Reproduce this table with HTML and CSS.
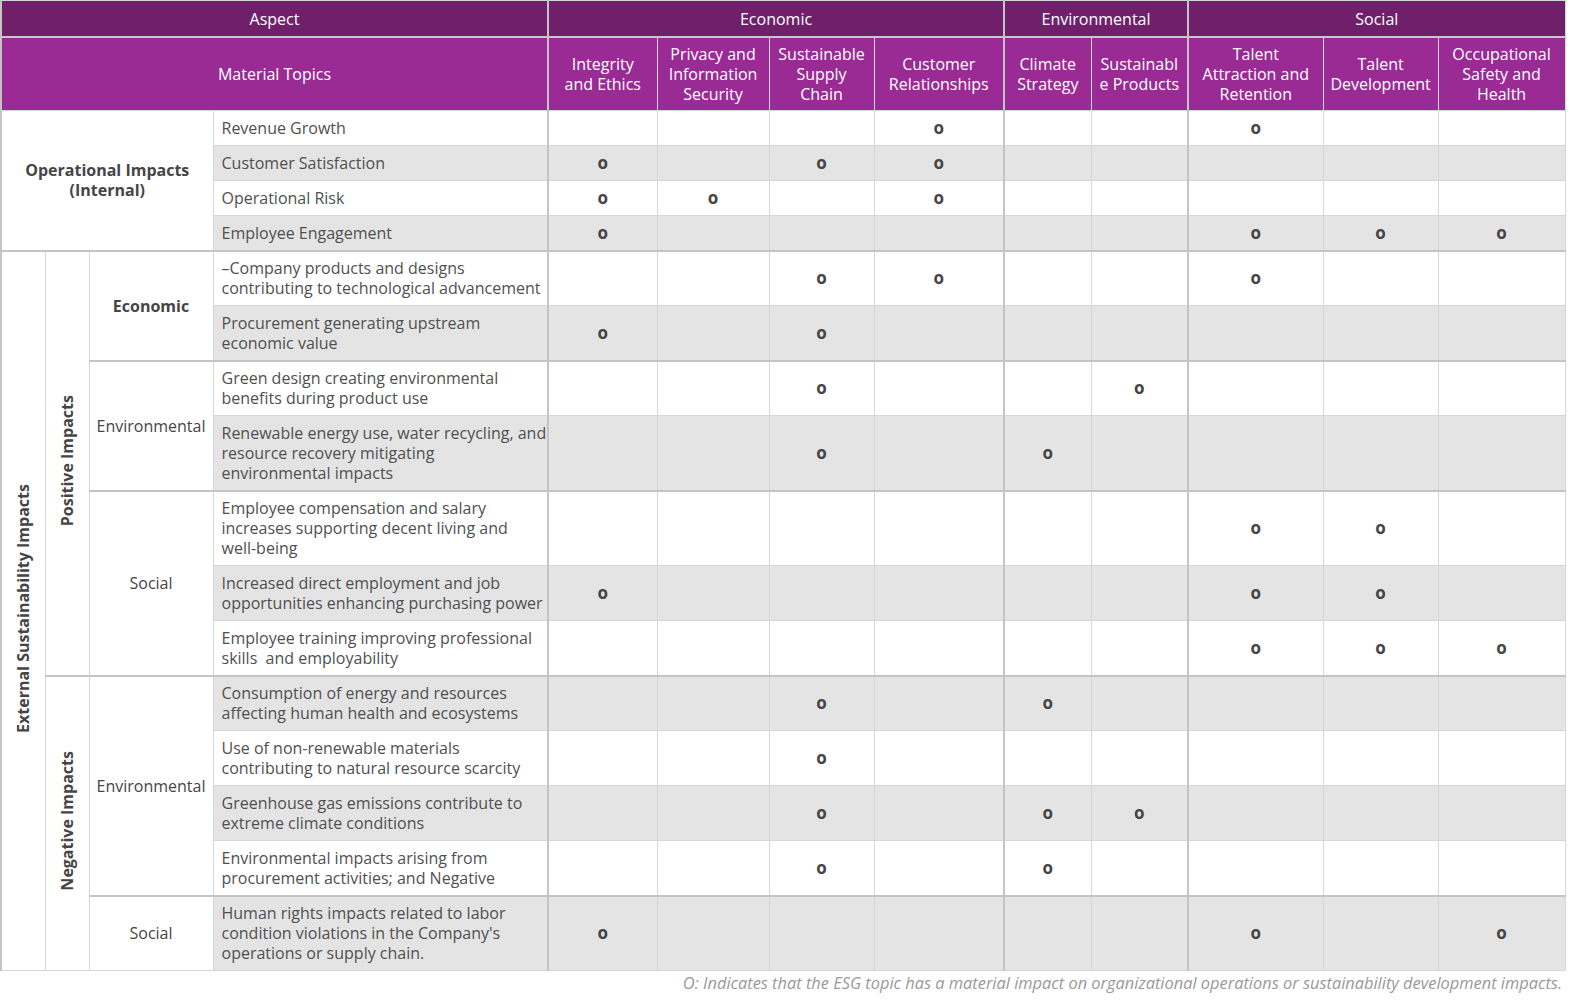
FILE: index.html
```html
<!DOCTYPE html>
<html lang="en">
<head>
<meta charset="utf-8">
<title>Material Topics Impact Matrix</title>
<link rel="stylesheet" href="styles.css">
</head>
<body>
<div class="wrap">
<table class="matrix">
  <colgroup>
    <col class="c-a"><col class="c-b"><col class="c-c"><col class="c-d">
    <col class="c-e1"><col class="c-e2"><col class="c-e3"><col class="c-e4">
    <col class="c-n1"><col class="c-n2">
    <col class="c-s1"><col class="c-s2"><col class="c-s3">
  </colgroup>
  <thead>
    <tr class="h1">
      <th colspan="4" class="sep">Aspect</th>
      <th colspan="4" class="sep">Economic</th>
      <th colspan="2" class="sep">Environmental</th>
      <th colspan="3">Social</th>
    </tr>
    <tr class="h2">
      <th colspan="4" class="sep">Material Topics</th>
      <th>Integrity<br>and Ethics</th>
      <th>Privacy and<br>Information<br>Security</th>
      <th>Sustainable<br>Supply<br>Chain</th>
      <th class="sep">Customer<br>Relationships</th>
      <th>Climate<br>Strategy</th>
      <th class="sep">Sustainabl<br>e Products</th>
      <th>Talent<br>Attraction and<br>Retention</th>
      <th>Talent<br>Development</th>
      <th>Occupational<br>Safety and<br>Health</th>
    </tr>
  </thead>
  <tbody>
    <tr class="l1">
      <td colspan="3" rowspan="4" class="label bold">Operational Impacts<br>(Internal)</td>
      <td class="topic">Revenue Growth</td>
      <td class="m"></td><td class="m"></td><td class="m"></td><td class="m sep">o</td><td class="m"></td><td class="m sep"></td><td class="m">o</td><td class="m"></td><td class="m"></td>
    </tr>
    <tr class="l1">
      <td class="topic">Customer Satisfaction</td>
      <td class="m">o</td><td class="m"></td><td class="m">o</td><td class="m sep">o</td><td class="m"></td><td class="m sep"></td><td class="m"></td><td class="m"></td><td class="m"></td>
    </tr>
    <tr class="l1">
      <td class="topic">Operational Risk</td>
      <td class="m">o</td><td class="m">o</td><td class="m"></td><td class="m sep">o</td><td class="m"></td><td class="m sep"></td><td class="m"></td><td class="m"></td><td class="m"></td>
    </tr>
    <tr class="l1">
      <td class="topic">Employee Engagement</td>
      <td class="m">o</td><td class="m"></td><td class="m"></td><td class="m sep"></td><td class="m"></td><td class="m sep"></td><td class="m">o</td><td class="m">o</td><td class="m">o</td>
    </tr>

    <tr class="l2 g">
      <td rowspan="12" class="label vert"><span>External Sustainability Impacts</span></td>
      <td rowspan="7" class="label vert"><span>Positive Impacts</span></td>
      <td rowspan="2" class="label bold">Economic</td>
      <td class="topic">–Company products and designs<br>contributing to technological advancement</td>
      <td class="m"></td><td class="m"></td><td class="m">o</td><td class="m sep">o</td><td class="m"></td><td class="m sep"></td><td class="m">o</td><td class="m"></td><td class="m"></td>
    </tr>
    <tr class="l2">
      <td class="topic">Procurement generating upstream<br>economic value</td>
      <td class="m">o</td><td class="m"></td><td class="m">o</td><td class="m sep"></td><td class="m"></td><td class="m sep"></td><td class="m"></td><td class="m"></td><td class="m"></td>
    </tr>
    <tr class="l2 g">
      <td rowspan="2" class="label">Environmental</td>
      <td class="topic">Green design creating environmental<br>benefits during product use</td>
      <td class="m"></td><td class="m"></td><td class="m">o</td><td class="m sep"></td><td class="m"></td><td class="m sep">o</td><td class="m"></td><td class="m"></td><td class="m"></td>
    </tr>
    <tr class="l3">
      <td class="topic">Renewable energy use, water recycling, and<br>resource recovery mitigating<br>environmental impacts</td>
      <td class="m"></td><td class="m"></td><td class="m">o</td><td class="m sep"></td><td class="m">o</td><td class="m sep"></td><td class="m"></td><td class="m"></td><td class="m"></td>
    </tr>
    <tr class="l3 g">
      <td rowspan="3" class="label">Social</td>
      <td class="topic">Employee compensation and salary<br>increases supporting decent living and<br>well-being</td>
      <td class="m"></td><td class="m"></td><td class="m"></td><td class="m sep"></td><td class="m"></td><td class="m sep"></td><td class="m">o</td><td class="m">o</td><td class="m"></td>
    </tr>
    <tr class="l2">
      <td class="topic">Increased direct employment and job<br>opportunities enhancing purchasing power</td>
      <td class="m">o</td><td class="m"></td><td class="m"></td><td class="m sep"></td><td class="m"></td><td class="m sep"></td><td class="m">o</td><td class="m">o</td><td class="m"></td>
    </tr>
    <tr class="l2">
      <td class="topic">Employee training improving professional<br>skills &nbsp;and employability</td>
      <td class="m"></td><td class="m"></td><td class="m"></td><td class="m sep"></td><td class="m"></td><td class="m sep"></td><td class="m">o</td><td class="m">o</td><td class="m">o</td>
    </tr>

    <tr class="l2 g">
      <td rowspan="5" class="label vert"><span>Negative Impacts</span></td>
      <td rowspan="4" class="label">Environmental</td>
      <td class="topic">Consumption of energy and resources<br>affecting human health and ecosystems</td>
      <td class="m"></td><td class="m"></td><td class="m">o</td><td class="m sep"></td><td class="m">o</td><td class="m sep"></td><td class="m"></td><td class="m"></td><td class="m"></td>
    </tr>
    <tr class="l2">
      <td class="topic">Use of non-renewable materials<br>contributing to natural resource scarcity</td>
      <td class="m"></td><td class="m"></td><td class="m">o</td><td class="m sep"></td><td class="m"></td><td class="m sep"></td><td class="m"></td><td class="m"></td><td class="m"></td>
    </tr>
    <tr class="l2">
      <td class="topic">Greenhouse gas emissions contribute to<br>extreme climate conditions</td>
      <td class="m"></td><td class="m"></td><td class="m">o</td><td class="m sep"></td><td class="m">o</td><td class="m sep">o</td><td class="m"></td><td class="m"></td><td class="m"></td>
    </tr>
    <tr class="l2">
      <td class="topic">Environmental impacts arising from<br>procurement activities; and Negative</td>
      <td class="m"></td><td class="m"></td><td class="m">o</td><td class="m sep"></td><td class="m">o</td><td class="m sep"></td><td class="m"></td><td class="m"></td><td class="m"></td>
    </tr>
    <tr class="l3 g">
      <td class="label">Social</td>
      <td class="topic">Human rights impacts related to labor<br>condition violations in the Company's<br>operations or supply chain.</td>
      <td class="m">o</td><td class="m"></td><td class="m"></td><td class="m sep"></td><td class="m"></td><td class="m sep"></td><td class="m">o</td><td class="m"></td><td class="m">o</td>
    </tr>
  </tbody>
</table>
<p class="note">O: Indicates that the ESG topic has a material impact on organizational operations or sustainability development impacts.</p>
</div>
</body>
</html>
```

FILE: styles.css
```css
html, body {
  margin: 0;
  padding: 0;
  background: #ffffff;
}

body {
  font-family: "Open Sans", "Noto Sans", sans-serif;
  font-size: 16px;
  color: #505050;
}

.wrap {
  width: 1565px;
}

.matrix {
  width: 1565px;
  table-layout: fixed;
  border-collapse: collapse;
  border-left: 2px solid #c4c4c4;
  border-top: 1px solid #c4c4c4;
  border-right: 1px solid #d0d0d0;
  border-bottom: 1px solid #d0d0d0;
}

.c-a { width: 44px; }
.c-b { width: 44px; }
.c-c { width: 124px; }
.c-d { width: 335px; }
.c-e1 { width: 109px; }
.c-e2 { width: 112px; }
.c-e3 { width: 105px; }
.c-e4 { width: 130px; }
.c-n1 { width: 87px; }
.c-n2 { width: 97px; }
.c-s1 { width: 135px; }
.c-s2 { width: 115px; }
.c-s3 { width: 127px; }

.matrix th,
.matrix td {
  border: 1px solid #d6d6d6;
  padding: 0;
  line-height: 20px;
}

.matrix th {
  color: #ffffff;
  font-weight: normal;
  text-align: center;
  vertical-align: middle;
}

.h1 { height: 36px; }
.matrix .h1 th {
  background: #70206b;
  border-bottom: 2px solid #c8c8c8;
  padding-top: 1px;
}

.h2 { height: 74px; }
.matrix .h2 th { background: #9a2a94; }

.matrix .sep {
  border-right: 2px solid #c4c4c4;
}

.l1 { height: 35px; }
.l2 { height: 55px; }
.l3 { height: 75px; }

.matrix .g > td {
  border-top: 2px solid #c4c4c4;
}

.matrix .topic {
  padding: 0 4px 0 8px;
  white-space: nowrap;
  overflow: hidden;
  vertical-align: middle;
  background: #ffffff;
  border-right: 2px solid #c4c4c4;
}

.matrix .m {
  text-align: center;
  vertical-align: middle;
  font-weight: bold;
  font-size: 17px;
  color: #454545;
  background: #ffffff;
}

.matrix tbody tr:nth-child(even) .topic,
.matrix tbody tr:nth-child(even) .m {
  background: #e4e4e4;
}

.matrix .label {
  background: #ffffff;
  text-align: center;
  vertical-align: middle;
  color: #454545;
}

.matrix .bold { font-weight: bold; }

.matrix .vert {
  font-weight: bold;
}

.vert span {
  display: inline-block;
  writing-mode: vertical-rl;
  transform: rotate(180deg);
  white-space: nowrap;
  line-height: 20px;
}

.note {
  margin: 2px 3px 0 0;
  text-align: right;
  font-style: italic;
  color: #999999;
  line-height: 20px;
  font-size: 16.4px;
}
```
